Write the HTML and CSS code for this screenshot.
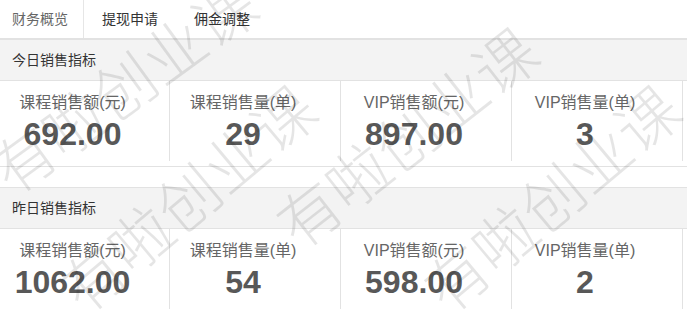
FILE: index.html
```html
<!DOCTYPE html>
<html lang="zh-CN">
<head>
<meta charset="utf-8">
<title>财务概览</title>
<link rel="stylesheet" href="styles.css">
</head>
<body>
<div class="page">
  <div class="tabs">
    <div class="tab active">财务概览</div>
    <div class="tab">提现申请</div>
    <div class="tab">佣金调整</div>
  </div>

  <section class="section">
    <div class="section-head">今日销售指标</div>
    <div class="cards">
      <div class="card first"><div class="label">课程销售额(元)</div><div class="value">692.00</div></div>
      <div class="card"><div class="label">课程销售量(单)</div><div class="value">29</div></div>
      <div class="card"><div class="label">VIP销售额(元)</div><div class="value">897.00</div></div>
      <div class="card"><div class="label">VIP销售量(单)</div><div class="value">3</div></div>
    </div>
  </section>

  <section class="section">
    <div class="section-head">昨日销售指标</div>
    <div class="cards">
      <div class="card first"><div class="label">课程销售额(元)</div><div class="value">1062.00</div></div>
      <div class="card"><div class="label">课程销售量(单)</div><div class="value">54</div></div>
      <div class="card"><div class="label">VIP销售额(元)</div><div class="value">598.00</div></div>
      <div class="card"><div class="label">VIP销售量(单)</div><div class="value">2</div></div>
    </div>
  </section>

  <svg class="watermark" width="687" height="312" viewBox="0 0 687 312" aria-hidden="true">
    <text x="122" y="84" transform="rotate(-36 122 84)">有啦创业课</text>
    <text x="186" y="196" transform="rotate(-40 186 196)">有啦创业课</text>
    <text x="405" y="135" transform="rotate(-38 405 135)">有啦创业课</text>
    <text x="550" y="196" transform="rotate(-40 550 196)">有啦创业课</text>
  </svg>
</div>
</body>
</html>
```

FILE: styles.css
```css
html, body {
  margin: 0;
  padding: 0;
  background: #fff;
}

body {
  font-family: "Liberation Sans", "Noto Sans CJK SC", sans-serif;
  color: #333;
}

.page {
  position: relative;
  width: 687px;
  height: 312px;
  overflow: hidden;
}

.tabs {
  display: flex;
  height: 38px;
  border-bottom: 1px solid #e2e2e2;
}

.tab {
  line-height: 38px;
  padding: 0 18px;
  font-size: 14px;
  color: #333;
}

.tab.active {
  padding: 0 15px 0 12px;
  border-right: 1px solid #e6e6e6;
  color: #666;
}

.section {
  margin-bottom: 20px;
}

.section-head {
  height: 40px;
  line-height: 40px;
  padding-left: 12px;
  font-size: 14px;
  color: #333;
  background: #f3f3f3;
  border-top: 1px solid #e2e2e2;
  border-bottom: 1px solid #e2e2e2;
}

.cards {
  display: grid;
  grid-template-columns: 170px 171px 171px 171px;
  padding-bottom: 5px;
  border-bottom: 1px solid #e2e2e2;
}

.card {
  box-sizing: border-box;
  height: 80px;
  padding-right: 24px;
  border-right: 1px solid #e2e2e2;
  text-align: center;
}

.label {
  margin-top: 12px;
  font-size: 16px;
  line-height: 20px;
  color: #666;
}

.value {
  margin-top: 3px;
  font-size: 32px;
  line-height: 36px;
  font-weight: bold;
  color: #585858;
}

.watermark {
  position: absolute;
  left: 0;
  top: 0;
  pointer-events: none;
}

.watermark text {
  font-family: "Noto Sans CJK SC", sans-serif;
  font-size: 62px;
  font-weight: 300;
  fill: rgba(0, 0, 0, 0.1);
  text-anchor: middle;
  dominant-baseline: central;
}
```
